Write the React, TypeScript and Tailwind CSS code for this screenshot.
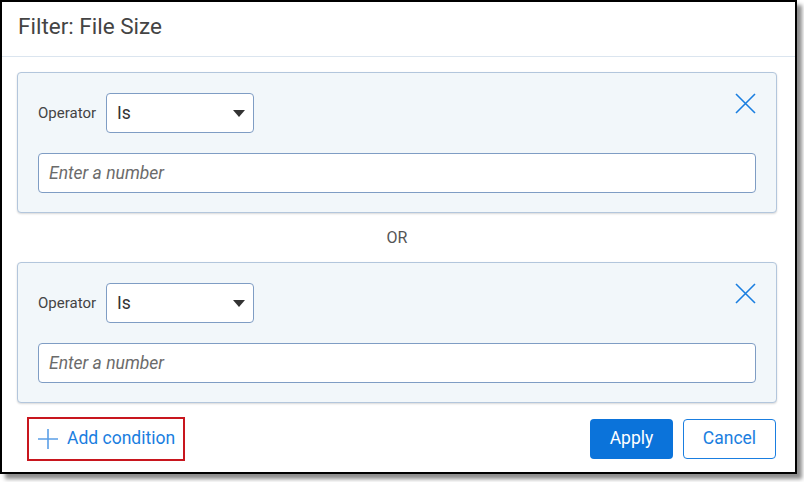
const font = { fontFamily: 'Roboto, "Liberation Sans", sans-serif' }

function CloseIcon() {
  return (
    <svg width="21" height="21" viewBox="0 0 21 21" className="shrink-0">
      <path d="M1 1 L20 20 M20 1 L1 20" stroke="#1a7ee0" strokeWidth="1.6" fill="none" />
    </svg>
  )
}

function PlusIcon() {
  return (
    <svg width="20" height="20" viewBox="0 0 20 20" className="shrink-0">
      <path d="M10 0 V20 M0 10 H20" stroke="#5b9fe6" strokeWidth="1.6" fill="none" />
    </svg>
  )
}

function ConditionCard() {
  return (
    <div className="h-[141px] rounded-[4px] border border-[#b3c6dc] bg-[#f2f7fa] pl-5 pr-5 pt-5 shadow-[0_1px_2px_rgba(0,0,0,0.15)]">
      <div className="flex items-start justify-between">
        <div className="flex items-center gap-[10px]">
          <span className="text-[15px] text-[#444]">Operator</span>
          <div className="flex h-10 w-[148px] items-center justify-between rounded-[4px] border border-[#7f9dc4] bg-white pl-[10px] pr-[8px]">
            <span className="text-[17.5px] text-[#333]">Is</span>
            <svg width="12" height="7" viewBox="0 0 12 7">
              <path d="M0 0 L12 0 L6 7 Z" fill="#333" />
            </svg>
          </div>
        </div>
        <CloseIcon />
      </div>
      <div className="mt-5 flex h-10 items-center rounded-[4px] border border-[#7f9dc4] bg-white px-[10px]">
        <span className="text-[17.5px] italic text-[#6b6b6b]">Enter a number</span>
      </div>
    </div>
  )
}

export default function App() {
  return (
    <div className="h-[482px] w-[804px] bg-white" style={font}>
      <div className="flex h-[474px] w-[797px] flex-col border-2 border-black bg-white shadow-[5px_5px_4px_rgba(0,0,0,0.45)]">
        <div className="flex h-[55px] shrink-0 items-center border-b border-[#dbe5ef] pb-[4px] pl-4">
          <h1 className="text-[22.5px] text-[#444]">Filter: File Size</h1>
        </div>
        <div className="pl-[15px] pr-[18px] pt-[15px]">
          <ConditionCard />
          <div className="flex h-[49px] items-center justify-center text-[16px] text-[#555]">OR</div>
          <ConditionCard />
        </div>
        <div className="flex flex-1 items-center justify-between pl-[25px] pr-[19px] pt-[2px]">
          <div className="flex h-[44px] w-[158px] items-center gap-[9px] border-2 border-[#c8161e] pl-[9px]">
            <PlusIcon />
            <span className="text-[17.5px] text-[#1a7ee0]">Add condition</span>
          </div>
          <div className="flex gap-[10px]">
            <button className="h-10 w-[83px] rounded-[4px] bg-[#0b73da] text-[17.5px] text-white">Apply</button>
            <button className="h-10 w-[93px] rounded-[4px] border border-[#1a7ee0] bg-white text-[17.5px] text-[#1a7ee0]">Cancel</button>
          </div>
        </div>
      </div>
    </div>
  )
}
